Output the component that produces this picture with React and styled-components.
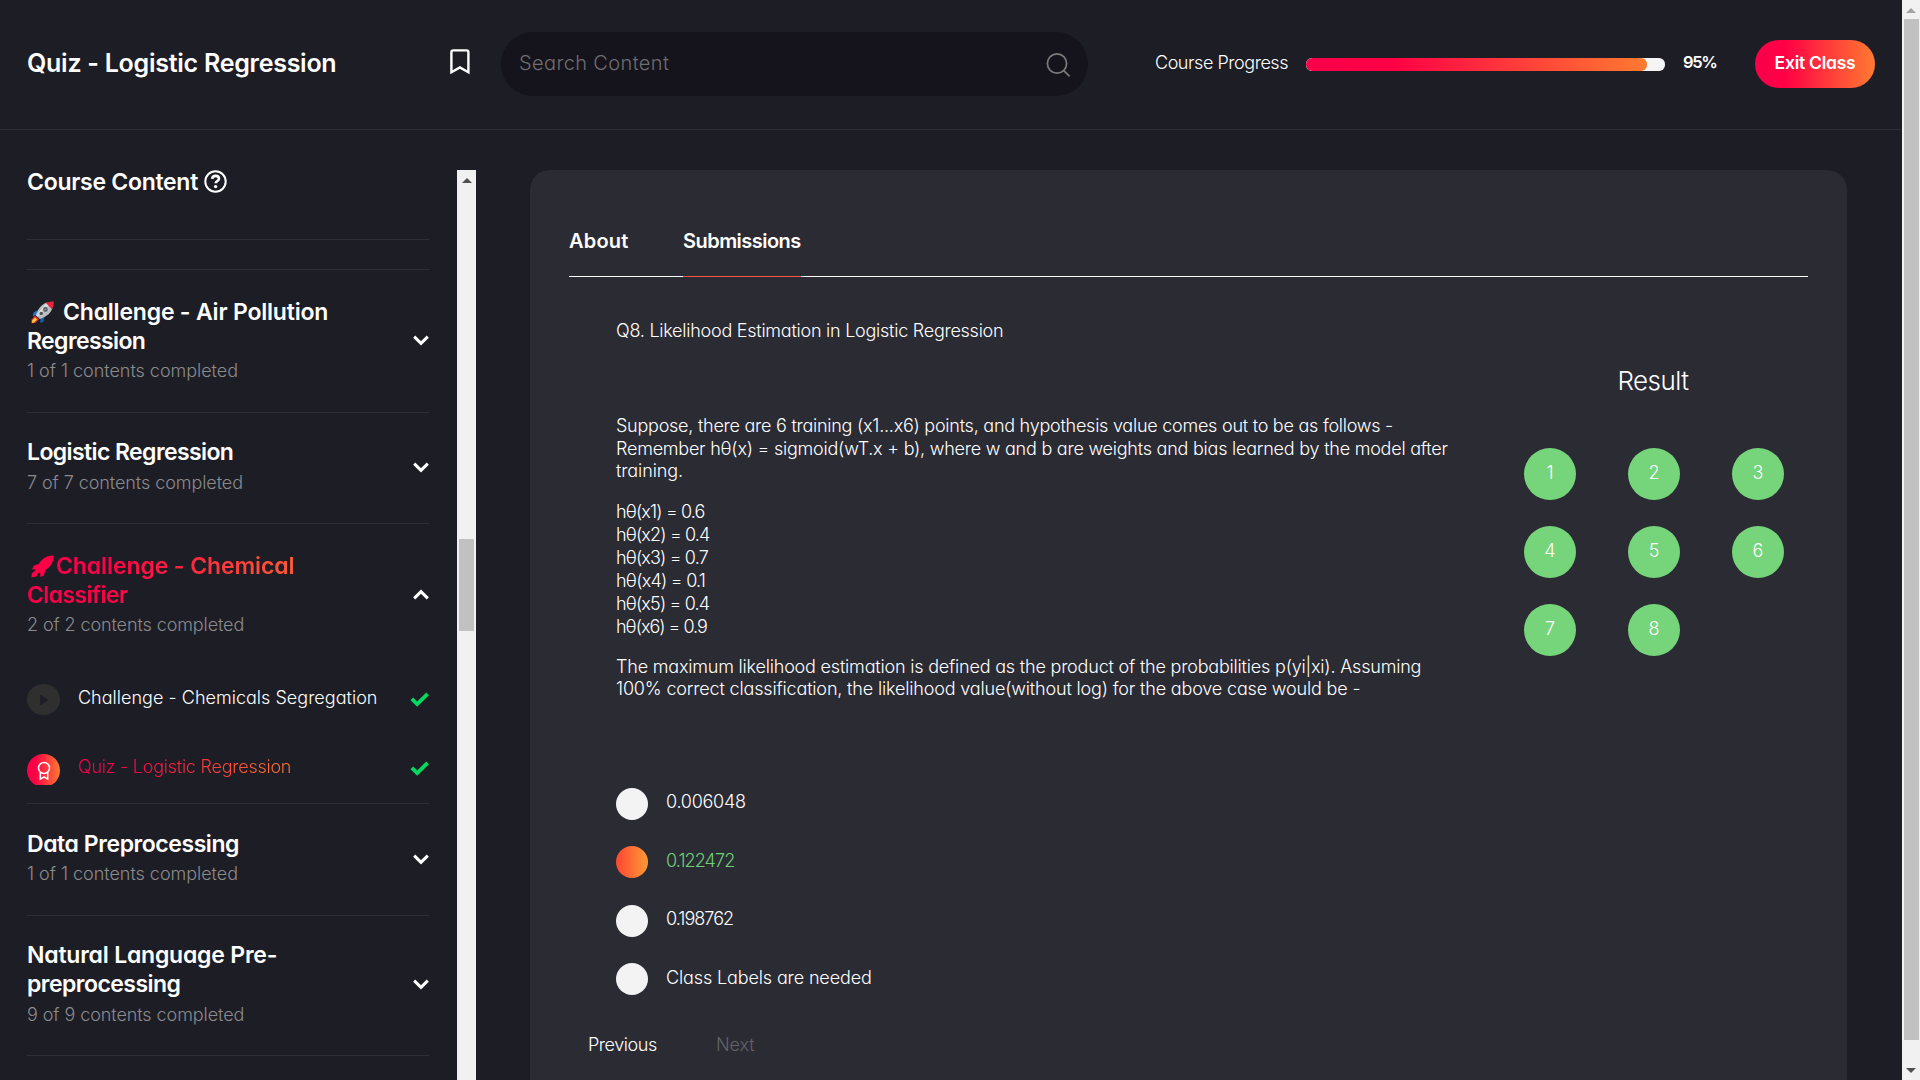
import React from "react";
import styled, { createGlobalStyle, css } from "styled-components";

const GRADIENT = "linear-gradient(90deg, #f9004a 0%, #ff0045 25%, #ff7a30 100%)";

const GlobalStyle = createGlobalStyle`
  *, *::before, *::after { box-sizing: border-box; }
  html, body { margin: 0; padding: 0; overflow: hidden; background: #1d1d26; }
  body {
    color: #fff;
    font-family: Inter, "Open Sans", sans-serif;
    font-feature-settings: "cv11" 1;
    font-size: 18px;
    font-weight: 300;
  }
  h1, h2, h3, p { margin: 0; font-weight: inherit; font-size: inherit; }
  button { border: 0; padding: 0; background: none; color: inherit; font: inherit; font-feature-settings: inherit; }
  svg { display: block; flex: none; }
`;

const tracked = css`
  letter-spacing: ${(p) => p.$track ?? 0}px;
  white-space: nowrap;
`;

/* ---------- page shell ---------- */

const Page = styled.div`
  display: flex;
  width: 1920px;
  height: 1080px;
  overflow: hidden;
`;

const Main = styled.div`
  display: flex;
  flex-direction: column;
  width: 1902px;
`;

const Body = styled.div`
  display: flex;
  flex: 1;
  min-height: 0;
  padding-top: 40px;
`;

/* ---------- scrollbars ---------- */

const Track = styled.div`
  display: flex;
  flex-direction: column;
  align-items: center;
  flex: none;
  width: ${(p) => p.$width}px;
  padding-top: 8px;
  background: #f1f1f1;
`;

const Arrow = styled.div`
  width: 0;
  height: 0;
  border: 5px solid transparent;
  border-top-width: ${(p) => (p.$down ? 5 : 0)}px;
  border-bottom-width: ${(p) => (p.$down ? 0 : 5)}px;
  border-${(p) => (p.$down ? "top" : "bottom")}-color: ${(p) => p.$color};
`;

const Thumb = styled.div`
  width: 15px;
  height: ${(p) => p.$height}px;
  margin-top: ${(p) => p.$offset}px;
  margin-bottom: 28px;
  background: #c1c1c1;
`;

/* ---------- header ---------- */

const Header = styled.header`
  display: flex;
  align-items: center;
  height: 130px;
  padding: 0 0 1px 27px;
  border-bottom: 1px solid #2f2f38;
`;

const PageTitle = styled.h1`
  width: 423px;
  padding-bottom: 2px;
  font-size: 25px;
  font-weight: 600;
  ${tracked}
`;

const BookmarkSlot = styled.div`
  padding-bottom: 5px;
`;

const SearchBox = styled.div`
  display: flex;
  align-items: center;
  justify-content: space-between;
  width: 587px;
  height: 64px;
  margin-left: 31px;
  padding: 0 17px 0 18px;
  border-radius: 32px;
  background: #15131c;
`;

const Placeholder = styled.span`
  padding-bottom: 2px;
  color: #6e6e70;
  font-size: 20px;
  ${tracked}
`;

const ProgressLabel = styled.span`
  width: 151px;
  margin-left: 67px;
  padding-bottom: 4px;
  ${tracked}
`;

const ProgressTrack = styled.div`
  width: 359px;
  height: 13px;
  border-radius: 6px;
  overflow: hidden;
  background: #f5f5f5;
`;

const ProgressFill = styled.div`
  width: 95%;
  height: 100%;
  border-radius: 6px;
  background: ${GRADIENT};
`;

const Percent = styled.span`
  width: 72px;
  margin-left: 18px;
  padding-bottom: 4px;
  font-size: 16.5px;
  font-weight: 600;
  ${tracked}
`;

const ExitButton = styled.button`
  width: 120px;
  height: 48px;
  padding-bottom: 4px;
  border-radius: 24px;
  background: ${GRADIENT};
  font-size: 17.5px;
  font-weight: 600;
  ${tracked}
`;

/* ---------- sidebar ---------- */

const Sidebar = styled.aside`
  display: flex;
  flex: none;
  width: 476px;
`;

const SidebarList = styled.div`
  width: 457px;
  padding: 0 28px 0 27px;
`;

const SidebarHeading = styled.h2`
  display: flex;
  align-items: center;
  gap: 6px;
  height: 29px;
  margin: -2px 0 42px;
  font-size: 23px;
  font-weight: 600;
  line-height: 29px;
  ${tracked}
`;

const HelpSlot = styled.span`
  padding-bottom: 2px;
`;

const Section = styled.section`
  height: ${(p) => p.$height}px;
  padding-top: ${(p) => p.$top ?? 0}px;
  border-top: 1px solid #2f2f38;
`;

const SectionHead = styled.div`
  display: flex;
  align-items: center;
  justify-content: space-between;
`;

const SectionTitle = styled.h3`
  width: 330px;
  margin-bottom: ${(p) => p.$gap ?? 4}px;
  font-size: 23px;
  font-weight: 600;
  line-height: 29px;
  ${(p) =>
    p.$active &&
    css`
      background: ${GRADIENT};
      background-clip: text;
      -webkit-background-clip: text;
      color: transparent;
    `}
`;

const TitleLine = styled.span`
  display: flex;
  align-items: center;
  height: 29px;
  padding-left: ${(p) => p.$indent ?? 0}px;
  ${tracked}
`;

const IconSlot = styled.span`
  flex: none;
  width: ${(p) => p.$width}px;
`;

const SectionMeta = styled.p`
  color: #8b8b8d;
  line-height: 22px;
  ${tracked}
`;

const ChevronSlot = styled.div`
  margin-top: ${(p) => p.$shift}px;
`;

const Lessons = styled.div`
  display: flex;
  flex-direction: column;
  gap: 39px;
  margin-top: 48px;
`;

const Lesson = styled.div`
  display: flex;
  align-items: center;
  height: 31px;
`;

const LessonBadge = styled.div`
  display: flex;
  flex: none;
  justify-content: center;
  width: 33px;
  height: 31px;
  overflow: hidden;
`;

const LessonDisc = styled.div`
  display: flex;
  flex: none;
  align-items: center;
  justify-content: center;
  width: 33px;
  height: ${(p) => (p.$active ? 33 : 31)}px;
  border-radius: 50%;
  background: ${(p) => (p.$active ? GRADIENT : "#302f30")};
`;

const LessonName = styled.span`
  margin-left: 18px;
  padding-bottom: ${(p) => (p.$active ? 7 : 5)}px;
  ${tracked}
  ${(p) =>
    p.$active &&
    css`
      background: ${GRADIENT};
      background-clip: text;
      -webkit-background-clip: text;
      color: transparent;
    `}
`;

const CheckSlot = styled.div`
  margin-left: auto;
  padding-bottom: ${(p) => (p.$active ? 3 : 1)}px;
`;

/* ---------- quiz card ---------- */

const Card = styled.main`
  width: 1317px;
  margin-left: 54px;
  padding: 59px 39px 0;
  border-radius: 20px 20px 0 0;
  background: #2b2b34;
`;

const Tabs = styled.div`
  display: flex;
  gap: 55px;
  height: 48px;
  border-bottom: 1px solid #fff;
`;

const Tab = styled.div`
  width: ${(p) => p.$width}px;
  height: 48px;
  border-bottom: 1px solid ${(p) => (p.$active ? "#fb5441" : "transparent")};
  font-size: 20px;
  font-weight: 600;
  line-height: 24px;
  ${tracked}
`;

const QuizRow = styled.div`
  display: flex;
`;

const Question = styled.div`
  width: 955px;
  padding: 42px 0 0 47px;
`;

const QuestionTitle = styled.p`
  margin-bottom: 73px;
  line-height: 23px;
  ${tracked}
`;

const Paragraph = styled.div`
  margin-bottom: ${(p) => p.$after}px;
  line-height: ${(p) => p.$leading}px;
`;

const Line = styled.p`
  ${tracked}
`;

const Options = styled.div`
  display: flex;
  flex-direction: column;
  gap: 26.6px;
`;

const Option = styled.div`
  display: flex;
  align-items: center;
  gap: 18px;
  height: 32px;
`;

const Radio = styled.div`
  width: 32px;
  height: 32px;
  border-radius: 50%;
  background: ${(p) => (p.$checked ? "linear-gradient(90deg, #ff4632, #fc9a35)" : "#f3f3f3")};
`;

const OptionText = styled.span`
  padding-bottom: 4px;
  color: ${(p) => (p.$correct ? "#6fcf74" : "#fff")};
  ${tracked}
`;

const Result = styled.div`
  display: flex;
  flex-direction: column;
  align-items: center;
  width: 260px;
  margin-top: 89px;
`;

const ResultTitle = styled.h2`
  margin-bottom: 52px;
  padding-right: 2px;
  font-size: 26px;
  line-height: 30px;
  ${tracked}
`;

const ResultGrid = styled.div`
  display: grid;
  grid-template-columns: repeat(3, 52px);
  gap: 26px 52px;
`;

const ResultDot = styled.div`
  display: flex;
  align-items: center;
  justify-content: center;
  height: 52px;
  padding-bottom: 4px;
  border-radius: 50%;
  background: #76d47a;
`;

const Pager = styled.nav`
  display: flex;
  padding: 38px 0 0 19px;
  line-height: 23px;
`;

const PagerLink = styled.span`
  width: 128px;
  color: ${(p) => (p.$disabled ? "#626268" : "#fff")};
  ${tracked}
`;

/* ---------- icons ---------- */

const BookmarkIcon = () => (
  <svg width="20" height="26" viewBox="0 0 20 26" fill="none" stroke="#fff" strokeWidth="2.4">
    <path d="M1.4 23.2V3.2Q1.4 1.4 3.2 1.4H16.6Q18.4 1.4 18.4 3.2V23.2L9.9 18.4Z" />
  </svg>
);

const SearchIcon = () => (
  <svg width="25" height="25" viewBox="0 0 25 25" fill="none" stroke="#7a7a7a" strokeWidth="1.7">
    <circle cx="11" cy="11.5" r="9.6" />
    <path d="M17.8 18.6L23.6 24.4" />
  </svg>
);

const HelpIcon = () => (
  <svg width="23" height="23" viewBox="0 0 23 23" fill="none" stroke="#fff" strokeWidth="2">
    <circle cx="11.5" cy="11.5" r="10.2" />
    <path d="M8.2 8.9C8.4 6.9 9.8 5.9 11.6 5.9C13.6 5.9 15 7 15 8.7C15 10.9 11.7 11 11.7 13.2" strokeWidth="2.6" />
    <circle cx="11.6" cy="16.6" r="1.7" fill="#fff" stroke="none" />
  </svg>
);

const ChevronIcon = ({ up }) => (
  <svg width="16" height="11" viewBox="0 0 16 11" fill="none" stroke="#fff" strokeWidth="3">
    <path d={up ? "M1.2 9.4L8 2.6L14.8 9.4" : "M1.2 1.6L8 8.4L14.8 1.6"} strokeLinejoin="miter" />
  </svg>
);

const CheckIcon = () => (
  <svg width="19" height="15" viewBox="0 0 19 15" fill="none" stroke="#06d860" strokeWidth="3.8">
    <path d="M1.8 6.8L7.2 12L17.6 1.8" />
  </svg>
);

const PlayIcon = () => (
  <svg width="10" height="12" viewBox="0 0 10 12">
    <path d="M1.2 0.6L9.4 6L1.2 11.4Z" fill="#1d1d26" />
  </svg>
);

const AwardIcon = () => (
  <svg width="14" height="20" viewBox="0 0 14 20" fill="none" stroke="#fff" strokeWidth="1.5">
    <circle cx="7" cy="7" r="5.5" />
    <path d="M3.3 11.2V18.2L7 15.8L10.7 18.2V11.2" />
  </svg>
);

const RocketIcon = () => (
  <svg width="23" height="23" viewBox="0 0 23 23">
    <path d="M6.2 9.2L2.6 11.4L1.6 15.2L6.6 13.6Z" fill="#1d78c8" />
    <path d="M13.4 16.2L12.6 21L9.2 21.8L9.4 16.6Z" fill="#0d5fa8" />
    <path d="M4.2 14.6L0.6 18.4L0.4 22.4L4.6 21.8L8 18.2Z" fill="#e5352b" />
    <path d="M4 16.6L1.2 19.6L0.8 22L3.4 21.2L6 18.4Z" fill="#ffc83d" />
    <path d="M15.8 1.6L21.4 7.2C20 11.4 16.6 15.4 8.8 18L5 14.2C6.6 8 10.4 3.6 15.8 1.6Z" fill="#b9bec2" />
    <path d="M5 14.2L15.8 1.6L18 3.8L6.6 15.8Z" fill="#d9dcde" />
    <path d="M14.8 2C17 0.8 20 0.3 22.8 0.4C22.8 3.2 22.4 6 21 8.2Z" fill="#e8243c" />
    <circle cx="14.4" cy="8.4" r="2.3" fill="#4d5358" />
    <circle cx="14.4" cy="8.4" r="1.1" fill="#8d979e" />
    <circle cx="10.2" cy="12.4" r="1.7" fill="#4d5358" />
  </svg>
);

const RocketShapeIcon = () => (
  <svg width="23" height="23" viewBox="0 0 23 23" fill="#fd0047">
    <path d="M22.8 0.4C22.8 5 21.4 9.6 16.4 13.6L14.2 15.4L13 20.4L9.4 22L9.2 18.2L8 17.6L5 21.6L0.4 22.4L0.8 18.6L4.6 15.2L4.2 14.2L1 14.6L3 10.4L7.8 9C11 3.4 16 0.2 22.8 0.4Z" />
  </svg>
);

/* ---------- data ---------- */

const SECTIONS = [
  {
    icon: <RocketIcon />, iconWidth: 32, indent: 4,
    lines: [["Challenge - Air Pollution", -0.2], ["Regression", -0.6]],
    meta: ["1 of 1 contents completed", -0.03], height: 143, top: 28, shift: 1,
  },
  {
    lines: [["Logistic Regression", -0.6]], gap: 5,
    meta: ["7 of 7 contents completed", -0.07], height: 111, top: 25, shift: 2,
  },
  {
    icon: <RocketShapeIcon />, iconWidth: 25, indent: 4, active: true,
    lines: [["Challenge - Chemical", -0.1], ["Classifier", -0.6]],
    meta: ["2 of 2 contents completed", -0.1], height: 280, top: 28, shift: 1,
    lessons: [
      { name: "Challenge - Chemicals Segregation", track: 0.02 },
      { name: "Quiz - Logistic Regression", track: -0.24, active: true },
    ],
  },
  {
    lines: [["Data Preprocessing", -0.43]],
    meta: ["1 of 1 contents completed", -0.03], height: 112, top: 26, shift: 3,
  },
  {
    lines: [["Natural Language Pre-", -0.21], ["preprocessing", -0.53]], gap: 5,
    meta: ["9 of 9 contents completed", -0.08], height: 140, top: 25, shift: 2,
  },
  { lines: [], height: 24, top: 0 },
];

const HYPOTHESES = [
  ["hθ(x1) = 0.6", -0.85],
  ["hθ(x2) = 0.4", -0.85],
  ["hθ(x3) = 0.7", -0.85],
  ["hθ(x4) = 0.1", -0.75],
  ["hθ(x5) = 0.4", -0.85],
  ["hθ(x6) = 0.9", -1],
];

const OPTIONS = [
  { text: "0.006048", track: -0.25 },
  { text: "0.122472", track: -0.9, checked: true },
  { text: "0.198762", track: -0.95 },
  { text: "Class Labels are needed", track: -0.13 },
];

/* ---------- components ---------- */

function SidebarSection({ icon, iconWidth, indent, lines, meta, gap, height, top, shift, active, lessons }) {
  return (
    <Section $height={height} $top={top}>
      {meta && (
        <SectionHead>
          <div>
            <SectionTitle $active={active} $gap={gap}>
              {lines.map(([text, track], i) => (
                <TitleLine key={text} $track={track} $indent={i === 0 ? indent : 0}>
                  {i === 0 && icon && <IconSlot $width={iconWidth}>{icon}</IconSlot>}
                  {text}
                </TitleLine>
              ))}
            </SectionTitle>
            <SectionMeta $track={meta[1]}>{meta[0]}</SectionMeta>
          </div>
          <ChevronSlot $shift={shift}>
            <ChevronIcon up={active} />
          </ChevronSlot>
        </SectionHead>
      )}
      {lessons && (
        <Lessons>
          {lessons.map((lesson) => (
            <Lesson key={lesson.name}>
              <LessonBadge>
                <LessonDisc $active={lesson.active}>
                  {lesson.active ? <AwardIcon /> : <PlayIcon />}
                </LessonDisc>
              </LessonBadge>
              <LessonName $active={lesson.active} $track={lesson.track}>
                {lesson.name}
              </LessonName>
              <CheckSlot $active={lesson.active}>
                <CheckIcon />
              </CheckSlot>
            </Lesson>
          ))}
        </Lessons>
      )}
    </Section>
  );
}

export default function App() {
  return (
    <>
      <GlobalStyle />
      <Page>
        <Main>
          <Header>
            <PageTitle $track={-0.26}>Quiz - Logistic Regression</PageTitle>
            <BookmarkSlot>
              <BookmarkIcon />
            </BookmarkSlot>
            <SearchBox>
              <Placeholder $track={0.38}>Search Content</Placeholder>
              <SearchIcon />
            </SearchBox>
            <ProgressLabel $track={-0.45}>Course Progress</ProgressLabel>
            <ProgressTrack>
              <ProgressFill />
            </ProgressTrack>
            <Percent $track={-1.3}>95%</Percent>
            <ExitButton $track={-0.25}>Exit Class</ExitButton>
          </Header>
          <Body>
            <Sidebar>
              <SidebarList>
                <SidebarHeading $track={-0.28}>
                  Course Content
                  <HelpSlot>
                    <HelpIcon />
                  </HelpSlot>
                </SidebarHeading>
                <Section $height={30} />
                {SECTIONS.map((section, i) => (
                  <SidebarSection key={i} {...section} />
                ))}
              </SidebarList>
              <Track $width={19}>
                <Arrow $color="#505050" />
                <Thumb $offset={356} $height={92} />
              </Track>
            </Sidebar>
            <Card>
              <Tabs>
                <Tab $width={59} $track={0.2}>About</Tab>
                <Tab $width={118} $track={-0.53} $active>Submissions</Tab>
              </Tabs>
              <QuizRow>
                <Question>
                  <QuestionTitle $track={-0.25}>Q8. Likelihood Estimation in Logistic Regression</QuestionTitle>
                  <Paragraph $leading={22.5} $after={17.5}>
                    <Line $track={-0.25}>
                      Suppose, there are 6 training (x1...x6) points, and hypothesis value comes out to be as follows -
                    </Line>
                    <Line $track={-0.23}>
                      Remember hθ(x) = sigmoid(wT.x + b), where w and b are weights and bias learned by the model after
                    </Line>
                    <Line $track={-0.1}>training.</Line>
                  </Paragraph>
                  <Paragraph $leading={23} $after={18}>
                    {HYPOTHESES.map(([text, track]) => (
                      <Line key={text} $track={track}>{text}</Line>
                    ))}
                  </Paragraph>
                  <Paragraph $leading={22} $after={87.5}>
                    <Line $track={-0.195}>
                      The maximum likelihood estimation is defined as the product of the probabilities p(yi|xi). Assuming
                    </Line>
                    <Line $track={-0.165}>
                      100% correct classification, the likelihood value(without log) for the above case would be -
                    </Line>
                  </Paragraph>
                  <Options>
                    {OPTIONS.map((option) => (
                      <Option key={option.text}>
                        <Radio $checked={option.checked} />
                        <OptionText $correct={option.checked} $track={option.track}>
                          {option.text}
                        </OptionText>
                      </Option>
                    ))}
                  </Options>
                </Question>
                <Result>
                  <ResultTitle $track={-0.5}>Result</ResultTitle>
                  <ResultGrid>
                    {[1, 2, 3, 4, 5, 6, 7, 8].map((n) => (
                      <ResultDot key={n}>{n}</ResultDot>
                    ))}
                  </ResultGrid>
                </Result>
              </QuizRow>
              <Pager>
                <PagerLink $track={-0.45}>Previous</PagerLink>
                <PagerLink $track={-0.1} $disabled>Next</PagerLink>
              </Pager>
            </Card>
          </Body>
        </Main>
        <Track $width={18}>
          <Arrow $color="#a3a3a3" />
          <Thumb $offset={6} $height={1021} />
          <Arrow $color="#505050" $down />
        </Track>
      </Page>
    </>
  );
}
